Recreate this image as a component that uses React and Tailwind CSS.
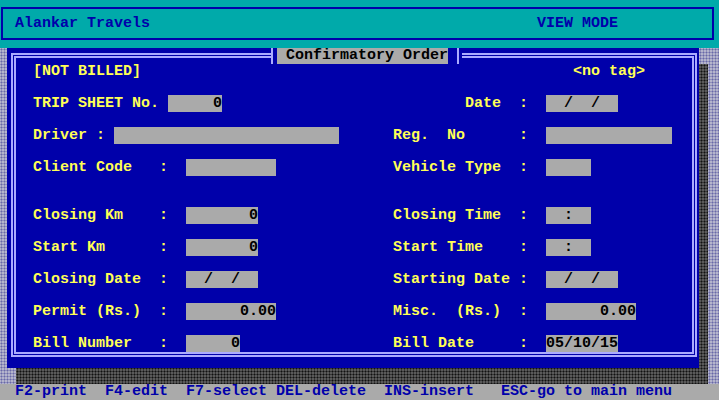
import React from 'react';

// gray input cell, black text
const Field = ({ children }) => (
  <span className="bg-[#aaaaaa] text-black">{children}</span>
);

// one form line: left half is 40 cells wide, right half follows
const Row = ({ left, right, className = '' }) => (
  <div className={`flex h-4 whitespace-pre ${className}`}>
    <div className="w-[360px] shrink-0">{left}</div>
    <div>{right}</div>
  </div>
);

const App = () => {
  return (
    <div className="w-[719px] h-[400px] overflow-hidden bg-black font-['Liberation_Mono',monospace] text-[15px] leading-4 font-bold">
      {/* Header strip */}
      <div className="h-12 bg-[#00aaaa] pt-[7px] pl-px">
        <div className="w-[713px] h-[33px] border-2 border-[#0000aa] pt-[7px] pl-3 whitespace-pre text-[#0000aa]">
          {'Alankar Travels' + ' '.repeat(43) + 'VIEW MODE'}
        </div>
      </div>

      {/* Desktop with the order window */}
      <div className="h-[336px] bg-[#b4b4cc] bg-[radial-gradient(#6868a8_0.9px,transparent_1.1px)] bg-[length:3px_3px] pl-[7px]">
        <div className="relative w-[692px] h-[320px]">
          {/* drop shadow */}
          <div className="absolute left-[9px] top-4 w-[692px] h-[320px] bg-[#5a5a5a] bg-[radial-gradient(#111_0.9px,transparent_1.1px)] bg-[length:3px_3px]" />

          <div className="relative w-full h-full bg-[#0000aa] pt-[5px] pl-[4px] pr-[2px] pb-[11px]">
            {/* double frame */}
            <div className="h-full border-2 border-[#aaaaff] p-px">
              <div className="h-full border-2 border-[#aaaaff] pt-[6px] pl-[17px] text-[#ffff55]">
                <div className="flex flex-col gap-4">
                  <Row left="[NOT BILLED]" right={' '.repeat(20) + '<no tag>'} />
                  <Row
                    left={<>{'TRIP SHEET No. '}<Field>{'     0'}</Field></>}
                    right={<>{'        Date  :  '}<Field>{'  /  /  '}</Field></>}
                  />
                  <Row
                    left={<>{'Driver : '}<Field>{' '.repeat(25)}</Field></>}
                    right={<>{'Reg.  No      :  '}<Field>{' '.repeat(14)}</Field></>}
                  />
                  <Row
                    left={<>{'Client Code   :  '}<Field>{' '.repeat(10)}</Field></>}
                    right={<>{'Vehicle Type  :  '}<Field>{'     '}</Field></>}
                  />
                  <Row
                    className="mt-4"
                    left={<>{'Closing Km    :  '}<Field>{'       0'}</Field></>}
                    right={<>{'Closing Time  :  '}<Field>{'  :  '}</Field></>}
                  />
                  <Row
                    left={<>{'Start Km      :  '}<Field>{'       0'}</Field></>}
                    right={<>{'Start Time    :  '}<Field>{'  :  '}</Field></>}
                  />
                  <Row
                    left={<>{'Closing Date  :  '}<Field>{'  /  /  '}</Field></>}
                    right={<>{'Starting Date :  '}<Field>{'  /  /  '}</Field></>}
                  />
                  <Row
                    left={<>{'Permit (Rs.)  :  '}<Field>{'      0.00'}</Field></>}
                    right={<>{'Misc.  (Rs.)  :  '}<Field>{'      0.00'}</Field></>}
                  />
                  <Row
                    left={<>{'Bill Number   :  '}<Field>{'     0'}</Field></>}
                    right={<>{'Bill Date     :  '}<Field>{'05/10/15'}</Field></>}
                  />
                </div>
              </div>
            </div>

            {/* window caption sits over the top frame */}
            <div className="absolute top-0 left-[264px] h-4 flex bg-[#0000aa]">
              <div className="w-[2px] bg-[#aaaaff]" />
              <div className="w-1" />
              <div className="whitespace-pre bg-[#aaaaaa] text-black">{' Confirmatory Order'}</div>
              <div className="w-[9px]" />
              <div className="w-[2px] bg-[#aaaaff]" />
              <div className="w-[3px]" />
            </div>
          </div>
        </div>
      </div>

      {/* Key help line */}
      <div className="h-4 bg-[#aaaaaa] pl-[15px] whitespace-pre text-[#0000aa]">
        {'F2-print  F4-edit  F7-select DEL-delete  INS-insert   ESC-go to main menu'}
      </div>
    </div>
  );
};

export default App;
